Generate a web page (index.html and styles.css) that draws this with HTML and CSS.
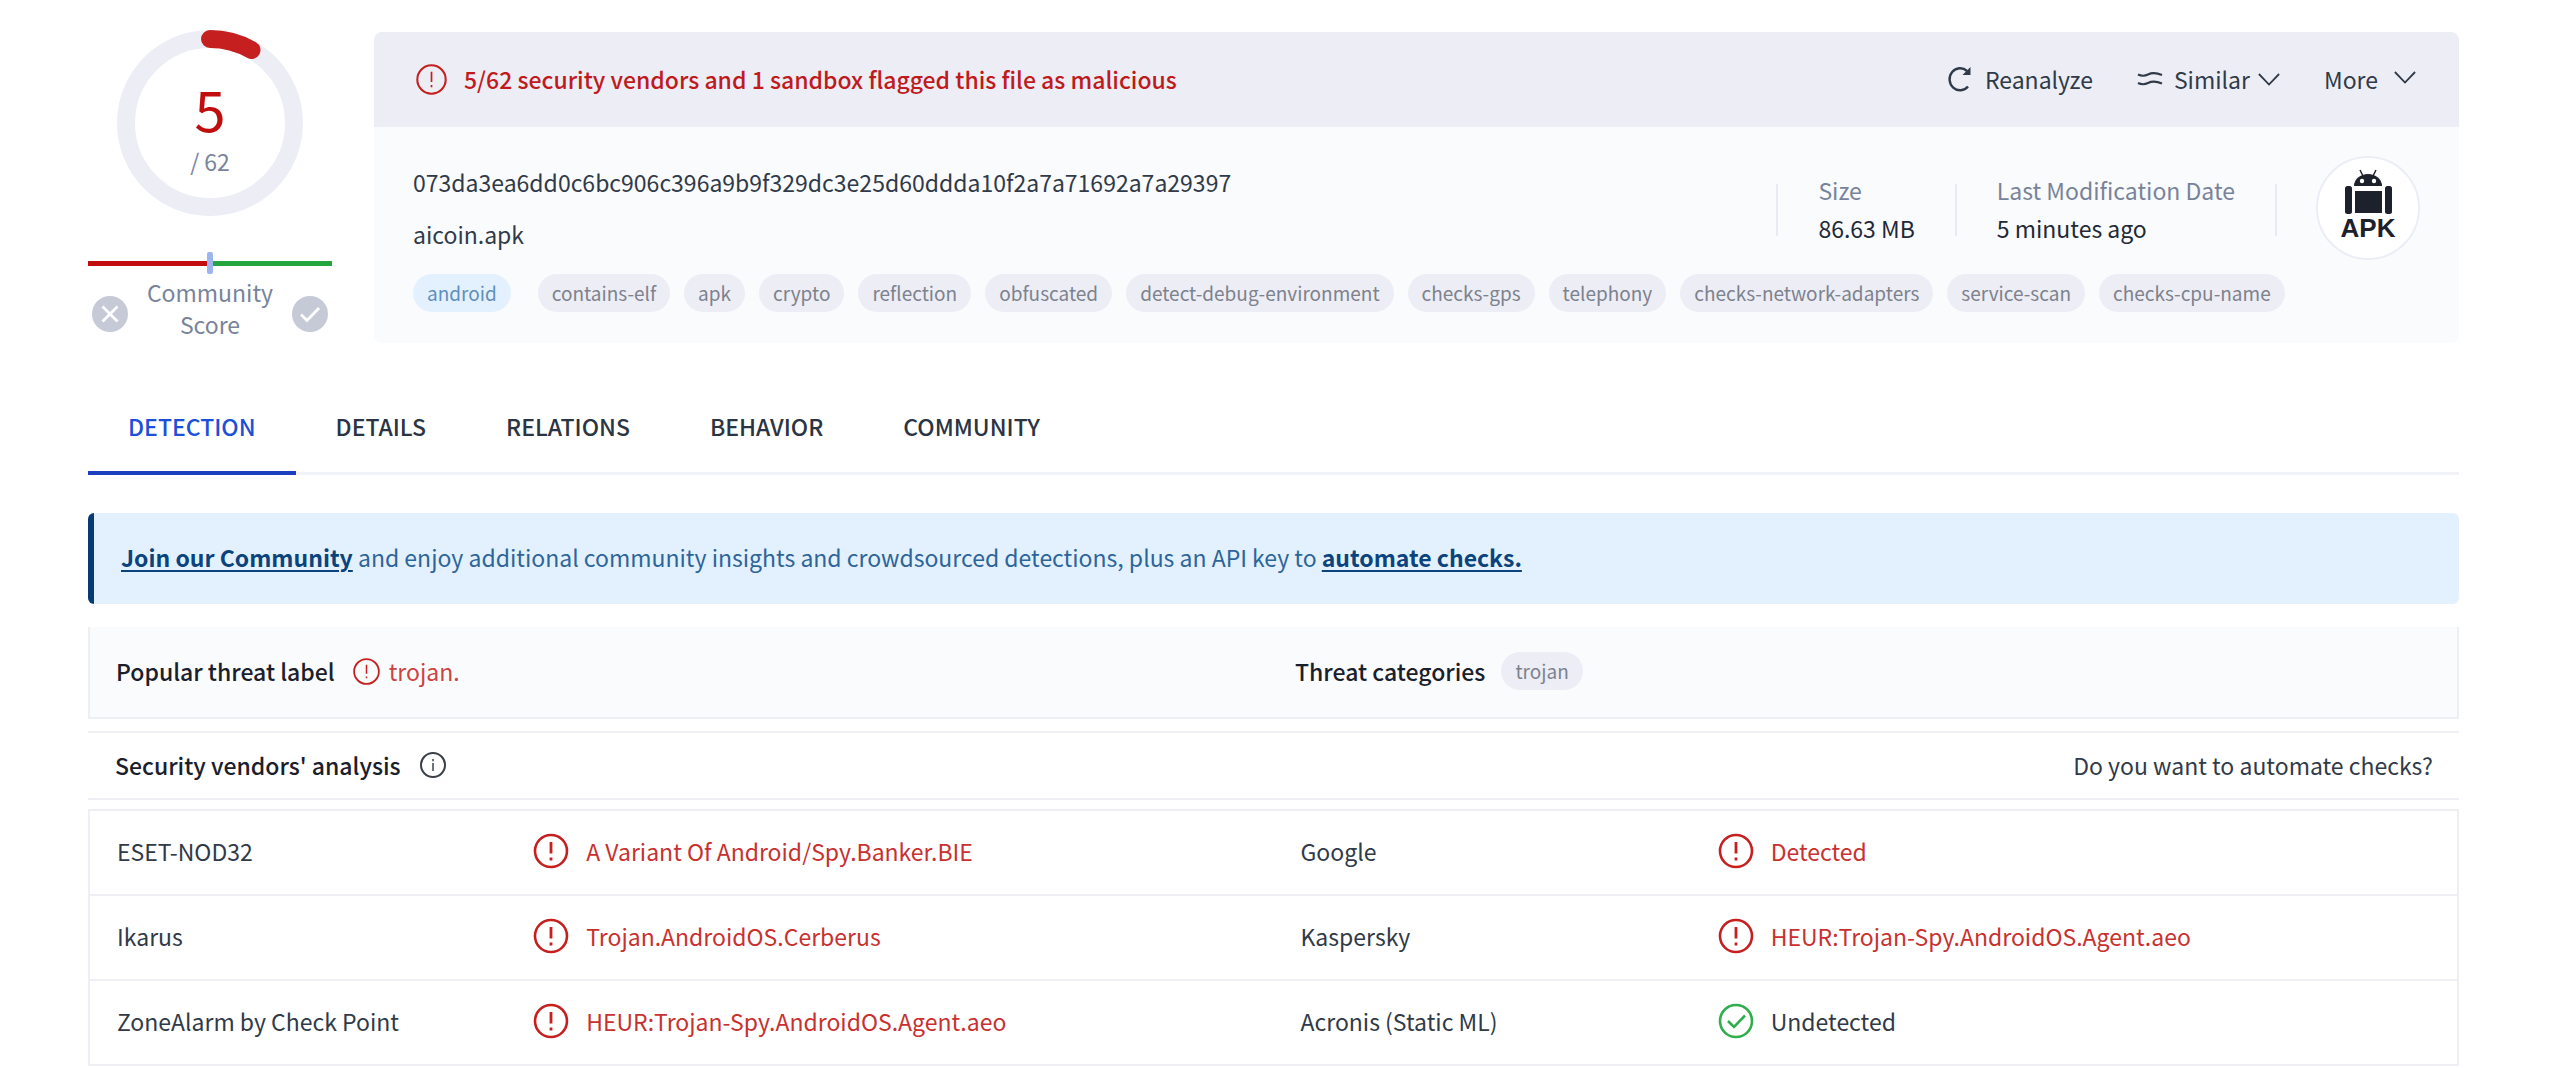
FILE: index.html
```html
<!DOCTYPE html>
<html lang="en">
<head>
<meta charset="utf-8">
<meta name="viewport" content="width=device-width, initial-scale=1">
<title>aicoin.apk - file report</title>
<link rel="stylesheet" href="styles.css">
</head>
<body>
<svg class="sprite" aria-hidden="true">
  <symbol id="alert" viewBox="0 0 36 36"><circle cx="18" cy="18" r="16" fill="none" stroke="currentColor" stroke-width="2.6"/><path d="M18 9v11.500M18 24.500v3" fill="none" stroke="currentColor" stroke-width="2.8"/></symbol>
  <symbol id="alert-thin" viewBox="0 0 36 36"><circle cx="18" cy="18" r="16.500" fill="none" stroke="currentColor" stroke-width="2.400"/><path d="M18 9v12M18 24.500v2.500" fill="none" stroke="currentColor" stroke-width="2"/></symbol>
  <symbol id="ok" viewBox="0 0 36 36"><circle cx="18" cy="18" r="16" fill="none" stroke="currentColor" stroke-width="2.6"/><path d="M10 18l6 6 11-11.500" fill="none" stroke="currentColor" stroke-width="2.6"/></symbol>
  <symbol id="chevron" viewBox="0 0 24 14"><path d="M1 1l11 11.500L23 1" fill="none" stroke="currentColor" stroke-width="2"/></symbol>
</svg>
<main class="page">
  <header class="summary">
    <section class="score">
      <div class="gauge">
        <svg class="gauge-ring" viewBox="0 0 186 186" aria-hidden="true">
          <circle cx="93" cy="93" r="84" fill="none" stroke="#ecedf5" stroke-width="18"/>
          <path d="M93 9A84 84 0 0 1 134.500 20" fill="none" stroke="#c5201f" stroke-width="18" stroke-linecap="round"/>
        </svg>
        <div class="gauge-text"><span class="gauge-value">5</span><span class="gauge-total">/ 62</span></div>
      </div>
      <div class="vote-bar"><span class="vote-bad"></span><span class="vote-mark"></span><span class="vote-good"></span></div>
      <div class="vote-row">
        <button class="vote" aria-label="Vote malicious"><svg viewBox="0 0 36 36"><circle cx="18" cy="18" r="18" fill="#c6cad6"/><path d="M10.500 10.500l15 15M25.500 10.500l-15 15" stroke="#fff" stroke-width="2.800" fill="none"/></svg></button>
        <span class="vote-label">Community Score</span>
        <button class="vote" aria-label="Vote harmless"><svg viewBox="0 0 36 36"><circle cx="18" cy="18" r="18" fill="#c6cad6"/><path d="M9 18.500l6 6L27 12" stroke="#fff" stroke-width="2.800" fill="none"/></svg></button>
      </div>
    </section>

    <section class="panel">
      <div class="panel-head">
        <svg class="icon-md red"><use href="#alert-thin"/></svg>
        <h1 class="verdict">5/62 security vendors and 1 sandbox flagged this file as malicious</h1>
        <div class="actions">
          <button class="action action-first"><svg class="icon-refresh" viewBox="0 0 24 26"><path d="M20 20.500A10.500 11 0 1 1 19 5" fill="none" stroke="currentColor" stroke-width="2.400"/><path d="M22.500 1v8h-8z" fill="currentColor"/></svg>Reanalyze</button>
          <button class="action action-similar"><svg class="icon-similar" viewBox="0 0 26 16"><path d="M1 3.500c4 2 7 1.500 10 0s8-2 14 .5M1 12c4 2 7 1.500 10 0s8-2 14 .5" fill="none" stroke="currentColor" stroke-width="2.200"/></svg>Similar<svg class="icon-chevron"><use href="#chevron"/></svg></button>
          <button class="action action-more">More<svg class="icon-chevron"><use href="#chevron"/></svg></button>
        </div>
      </div>
      <div class="panel-body">
        <div class="file-row">
          <div class="file-names"><p>073da3ea6dd0c6bc906c396a9b9f329dc3e25d60ddda10f2a7a71692a7a29397</p><p>aicoin.apk</p></div>
          <dl class="facts">
            <div class="fact"><dt>Size</dt><dd>86.63 MB</dd></div>
            <div class="fact"><dt>Last Modification Date</dt><dd>5 minutes ago</dd></div>
          </dl>
          <svg class="apk" viewBox="0 0 104 104" role="img" aria-label="APK file">
            <circle cx="52" cy="52" r="51" fill="#fff" stroke="#ecedf5" stroke-width="2"/>
            <g fill="#1d212b">
              <path d="M38 30a14 12 0 0 1 28 0z"/>
              <path d="M44 14l3 6M60 14l-3 6" stroke="#1d212b" stroke-width="1.500"/>
              <rect x="39" y="35" width="27" height="22"/>
              <rect x="29" y="30" width="7" height="28" rx="2.500"/>
              <rect x="69" y="30" width="7" height="28" rx="2.500"/>
              <text x="52" y="81" class="apk-text" text-anchor="middle">APK</text>
            </g>
            <circle cx="46" cy="25" r="2.200" fill="#fff"/><circle cx="58" cy="25" r="2.200" fill="#fff"/>
          </svg>
        </div>
        <ul class="tags">
          <li class="tag tag-blue">android</li><li class="tag">contains-elf</li><li class="tag">apk</li><li class="tag">crypto</li><li class="tag">reflection</li><li class="tag">obfuscated</li><li class="tag">detect-debug-environment</li><li class="tag">checks-gps</li><li class="tag">telephony</li><li class="tag">checks-network-adapters</li><li class="tag">service-scan</li><li class="tag">checks-cpu-name</li>
        </ul>
      </div>
    </section>
  </header>

  <nav class="tabs">
    <a class="tab tab-active" href="#detection">DETECTION</a>
    <a class="tab" href="#details">DETAILS</a>
    <a class="tab" href="#relations">RELATIONS</a>
    <a class="tab" href="#behavior">BEHAVIOR</a>
    <a class="tab" href="#community">COMMUNITY</a>
  </nav>

  <p class="banner"><a href="#join">Join our Community</a> and enjoy additional community insights and crowdsourced detections, plus an API key to <a href="#api">automate checks.</a></p>

  <section class="threat">
    <div class="threat-cell"><strong>Popular threat label</strong><svg class="icon-sm red"><use href="#alert-thin"/></svg><span class="threat-name">trojan.</span></div>
    <div class="threat-cell threat-right"><strong>Threat categories</strong><span class="tag">trojan</span></div>
  </section>

  <section class="analysis">
    <h2>Security vendors' analysis</h2>
    <svg class="icon-info" viewBox="0 0 28 28"><circle cx="14" cy="14" r="12" fill="none" stroke="#3a3f48" stroke-width="2"/><path d="M14 12v8M14 8v2.200" stroke="#6d727b" stroke-width="2"/></svg>
    <a class="automate" href="#automate">Do you want to automate checks?</a>
  </section>

  <table class="vendors">
    <colgroup><col class="col-name"><col class="col-result"><col class="col-name"><col class="col-result"></colgroup>
    <tbody>
      <tr><td class="name">ESET-NOD32</td><td><span class="result bad"><svg class="icon-lg"><use href="#alert"/></svg>A Variant Of Android/Spy.Banker.BIE</span></td><td class="name">Google</td><td><span class="result bad"><svg class="icon-lg"><use href="#alert"/></svg>Detected</span></td></tr>
      <tr><td class="name">Ikarus</td><td><span class="result bad"><svg class="icon-lg"><use href="#alert"/></svg>Trojan.AndroidOS.Cerberus</span></td><td class="name">Kaspersky</td><td><span class="result bad"><svg class="icon-lg"><use href="#alert"/></svg>HEUR:Trojan-Spy.AndroidOS.Agent.aeo</span></td></tr>
      <tr><td class="name">ZoneAlarm by Check Point</td><td><span class="result bad"><svg class="icon-lg"><use href="#alert"/></svg>HEUR:Trojan-Spy.AndroidOS.Agent.aeo</span></td><td class="name">Acronis (Static ML)</td><td><span class="result"><svg class="icon-lg green"><use href="#ok"/></svg>Undetected</span></td></tr>
    </tbody>
  </table>
</main>
</body>
</html>
```
FILE: styles.css
```css
* { box-sizing: border-box; }
body { margin: 0; background: #fff; color: #303a48; font: 23px/32px "Noto Sans CJK SC", "Open Sans", sans-serif; }
p, h1, h2, ul, dl, dd { margin: 0; padding: 0; }
button { margin: 0; padding: 0; border: 0; background: none; color: inherit; font: inherit; cursor: pointer; }
a { color: inherit; text-decoration: none; }
svg { display: block; flex: none; }
.sprite { position: absolute; width: 0; height: 0; }
.page { padding: 30px 101px 0 88px; }
.red { color: #c5201f; }
.green { color: #2eae4c; }

.summary { display: flex; gap: 42px; }
.score { width: 244px; flex: none; }
.gauge { display: grid; width: 186px; height: 186px; margin: 0 auto; }
.gauge-ring, .gauge-text { grid-area: 1 / 1; }
.gauge-text { display: flex; flex-direction: column; align-items: center; padding-top: 48px; }
.gauge-value { color: #c00d0d; font-size: 56px; line-height: 60px; }
.gauge-total { margin-top: 7px; color: #7a859c; }
.vote-bar { display: flex; align-items: center; height: 22px; margin-top: 36px; }
.vote-bad, .vote-good { flex: 1; height: 5px; background: #c00d0d; }
.vote-good { background: #22a63d; }
.vote-mark { width: 6px; height: 22px; border-radius: 2px; background: #9db5ee; }
.vote-row { display: flex; align-items: flex-start; justify-content: space-between; padding: 2px 4px 0; }
.vote { margin-top: 20px; }
.vote svg { width: 36px; height: 36px; }
.vote-label { width: 140px; color: #78839b; text-align: center; }

.panel { flex: 1; min-width: 0; margin-top: 2px; border-radius: 8px; overflow: hidden; background: #fafbfd; }
.panel-head { display: flex; align-items: center; min-height: 95px; padding: 0 43px 1px 42px; background: #ecedf5; }
.icon-md { width: 31px; height: 31px; }
.verdict { margin-left: 17px; color: #c01a1c; font-size: 23px; font-weight: 500; line-height: 32px; }
.actions { display: flex; align-items: center; margin-left: auto; }
.action { display: flex; align-items: center; }
.action-similar, .action-more { margin-left: 44px; }
.icon-refresh { width: 24px; height: 26px; margin-right: 13px; }
.icon-similar { width: 26px; height: 16px; margin-right: 11px; }
.icon-chevron { width: 22px; height: 13px; margin-left: 8px; }
.action-more .icon-chevron { margin: 0 0 4px 16px; }
.panel-body { padding: 29px 39px 31px; }
.file-row { display: flex; align-items: flex-start; }
.file-names { flex: 1; padding-top: 10px; }
.file-names p + p { margin-top: 20px; }
.facts { display: flex; padding-top: 28px; }
.fact { display: flex; flex-direction: column; justify-content: center; height: 52px; padding: 0 40px 3px; border-left: 2px solid #e8ebf3; }
.fact:last-child { border-right: 2px solid #e8ebf3; }
.fact dt { color: #78839b; line-height: 38px; }
.fact dd { color: #1f2937; line-height: 38px; }
.apk { width: 104px; height: 104px; margin-left: 39px; }
.apk-text { font: bold 26px "Liberation Sans", sans-serif; }
.tags { display: flex; flex-wrap: wrap; gap: 14px; margin-top: 14px; list-style: none; }
.tag { padding: 0 14px; border-radius: 19px; background: #ecedf5; color: #7d828d; font-size: 19px; line-height: 38px; white-space: nowrap; }
.tag-blue { margin-right: 13px; background: #e3f1fe; color: #5f8fbe; }

.tabs { display: flex; margin-top: 49px; border-bottom: 3px solid #f1f3f8; }
.tab { margin-bottom: -3px; padding: 18px 40px 29px; border-bottom: 4px solid transparent; font-weight: 500; color: #2b3442; }
.tab-active { border-color: #1c3fc0; color: #1b50d8; }

.banner { margin-top: 38px; padding: 28px 27px 31px; border-left: 6px solid #063a75; border-radius: 6px; background: #e3f1fe; color: #2d659b; }
.banner a { color: #0b447d; font-weight: 700; text-decoration: underline; text-decoration-thickness: 2px; text-underline-offset: 3px; }

.threat { display: flex; margin-top: 23px; border: 2px solid #eeeff4; border-top: 0; background: #fafbfd; }
.threat-cell { display: flex; flex: 1; align-items: center; height: 90px; padding: 0 0 2px 26px; }
.threat-right { padding-left: 17px; }
.threat strong, .analysis h2 { color: #1a202b; font-size: 23px; font-weight: 500; line-height: 32px; }
.icon-sm { width: 27px; height: 27px; margin: 0 9px 0 18px; }
.threat-name { color: #cd4340; }
.threat .tag { margin-left: 16px; }

.analysis { display: flex; align-items: center; height: 69px; margin-top: 12px; padding: 0 26px 2px 27px; border: solid #eeeff4; border-width: 2px 0; }
.icon-info { width: 28px; height: 28px; margin-left: 18px; }
.automate { margin-left: auto; }

.vendors { width: 100%; margin-top: 9px; border: 2px solid #eeeff4; border-collapse: collapse; table-layout: fixed; }
.col-name { width: 18.75%; }
.col-result { width: 31.25%; }
.vendors tr { border-bottom: 2px solid #eeeff4; }
.vendors td { height: 85px; padding: 0 0 3px; }
.vendors .name { padding-left: 27px; }
.result { display: flex; align-items: center; gap: 17px; }
.result.bad { color: #c8312f; }
.icon-lg { width: 36px; height: 36px; }
.bad .icon-lg { color: #c5201f; }
```
